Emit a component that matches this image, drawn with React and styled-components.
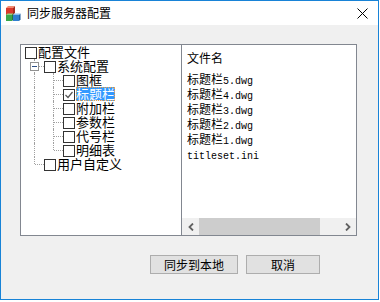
import styled, { createGlobalStyle } from "styled-components";

const GlobalStyle = createGlobalStyle`
  body {
    margin: 0;
    background: #fff;
    font-family: "Noto Sans CJK SC", "Liberation Sans", sans-serif;
  }
`;

const Window = styled.div`
  width: 379px;
  height: 300px;
  box-sizing: border-box;
  border: 1px solid #1883d7;
  display: flex;
  flex-direction: column;
  background: #f0f0f0;
`;

const TitleBar = styled.div`
  height: 24px;
  flex: none;
  background: #fff;
  display: flex;
  align-items: center;
  padding-left: 4px;
`;

const Title = styled.span`
  margin-left: 6px;
  font-size: 12px;
  line-height: 24px;
  color: #000;
`;

const Close = styled.svg`
  margin-left: auto;
  margin-right: 10px;
`;

const Client = styled.div`
  flex: 1;
  display: flex;
  flex-direction: column;
  padding: 19px 21px 0 19px;
`;

const SplitBox = styled.div`
  height: 192px;
  box-sizing: border-box;
  border: 1px solid #828790;
  display: flex;
`;

const TreePane = styled.div`
  width: 160px;
  flex: none;
  background: #fff;
  border-right: 1px solid #828790;
`;

const TreeRow = styled.div`
  height: 14px;
  display: flex;
  padding-left: 4px;
`;

const Guide = styled.span`
  position: relative;
  width: 19px;
  height: 14px;
  flex: none;

  &::before {
    content: "";
    position: absolute;
    left: 9px;
    top: 0;
    height: ${(p) => (p.$kind === "end" ? "7px" : "14px")};
    border-left: 1px dotted #a0a0a0;
  }

  &::after {
    content: "";
    display: ${(p) => (p.$kind === "pass" ? "none" : "block")};
    position: absolute;
    left: 10px;
    right: 0;
    top: 7px;
    border-top: 1px dotted #a0a0a0;
  }
`;

const Expander = styled.span`
  position: absolute;
  z-index: 1;
  left: 5px;
  top: 3px;
  width: 9px;
  height: 9px;
  box-sizing: border-box;
  border: 1px solid #919191;
  background: #fff;

  &::after {
    content: "";
    position: absolute;
    left: 1px;
    right: 1px;
    top: 3px;
    border-top: 1px solid #2d4f86;
  }
`;

const CheckBox = styled.span`
  width: 12px;
  height: 12px;
  margin-top: 2px;
  box-sizing: border-box;
  border: 1px solid #333;
  background: #fff;
  flex: none;
  display: flex;
  align-items: center;
  justify-content: center;
`;

const NodeLabel = styled.span`
  margin-left: 1px;
  height: 14px;
  line-height: 14px;
  font-size: 13px;
  white-space: nowrap;
  box-sizing: border-box;
  color: ${(p) => (p.$selected ? "#fff" : "#000")};
  background: ${(p) => (p.$selected ? "#3399ff" : "transparent")};
  outline: ${(p) => (p.$selected ? "1px dotted #f0a040" : "none")};
  outline-offset: -1px;
`;

const FilePane = styled.div`
  flex: 1;
  min-width: 0;
  display: flex;
  flex-direction: column;
  background: #fff;
`;

const FileList = styled.div`
  flex: 1;
  padding: 5px 0 0 5px;
  font-size: 12px;
  color: #000;
`;

const FileHeader = styled.div`
  height: 21px;
  line-height: 15px;
`;

const FileItem = styled.div`
  height: 15px;
  line-height: 15px;
  white-space: nowrap;
`;

const Latin = styled.span`
  font-family: "Liberation Mono", monospace;
  font-size: 10px;
`;

const HScroll = styled.div`
  height: 17px;
  flex: none;
  display: flex;
  background: #f0f0f0;
`;

const ScrollArrow = styled.div`
  width: 17px;
  flex: none;
  display: flex;
  align-items: center;
  justify-content: center;
`;

const ScrollTrack = styled.div`
  flex: 1;
  display: flex;
`;

const ScrollThumb = styled.div`
  width: 121px;
  background: #cdcdcd;
`;

const ButtonRow = styled.div`
  margin-top: 19px;
  display: flex;
  justify-content: flex-end;
  gap: 8px;
  padding-right: 37px;
`;

const Button = styled.button`
  width: ${(p) => p.$w}px;
  height: 19px;
  padding: 0;
  border: 1px solid #adadad;
  background: #e1e1e1;
  font-family: inherit;
  font-size: 12px;
  line-height: 17px;
  color: #000;
`;

const tree = [
  { label: "配置文件", guides: [] },
  { label: "系统配置", guides: ["tee"], expander: true },
  { label: "图框", guides: ["pass", "tee"] },
  { label: "标题栏", guides: ["pass", "tee"], checked: true, selected: true },
  { label: "附加栏", guides: ["pass", "tee"] },
  { label: "参数栏", guides: ["pass", "tee"] },
  { label: "代号栏", guides: ["pass", "tee"] },
  { label: "明细表", guides: ["pass", "end"] },
  { label: "用户自定义", guides: ["end"] },
];

const files = [
  "标题栏5.dwg",
  "标题栏4.dwg",
  "标题栏3.dwg",
  "标题栏2.dwg",
  "标题栏1.dwg",
  "titleset.ini",
];

const AppIcon = () => (
  <svg width="16" height="16" viewBox="0 0 16 16">
    <polygon points="1,3 3,1 10,1 8,3" fill="#f28a6e" />
    <rect x="1" y="3" width="7" height="7" fill="#d9382c" />
    <polygon points="8,3 10,1 10,8 8,10" fill="#a52a1c" />
    <polygon points="1,10 2.5,8.5 8.5,8.5 7,10" fill="#8ed07e" />
    <rect x="1" y="10" width="6" height="6" fill="#3aa64a" />
    <polygon points="7,10 8.5,8.5 8.5,14.5 7,16" fill="#237a36" />
    <polygon points="8,10 9.5,8.5 15.5,8.5 14,10" fill="#8dc0f0" />
    <rect x="8" y="10" width="6" height="6" fill="#2f7fd0" />
    <polygon points="14,10 15.5,8.5 15.5,14.5 14,16" fill="#1b5a9e" />
  </svg>
);

const Chevron = ({ dir }) => (
  <svg width="6" height="8" viewBox="0 0 6 8">
    {dir === "left" ? (
      <polyline points="5,0.5 1.5,4 5,7.5" fill="none" stroke="#606060" strokeWidth="1.8" />
    ) : (
      <polyline points="1,0.5 4.5,4 1,7.5" fill="none" stroke="#606060" strokeWidth="1.8" />
    )}
  </svg>
);

const FileName = ({ name }) => (
  <FileItem>
    {name.split(/([\x00-\x7f]+)/).map((part, i) =>
      /^[\x00-\x7f]+$/.test(part) ? <Latin key={i}>{part}</Latin> : part
    )}
  </FileItem>
);

export default function App() {
  return (
    <>
      <GlobalStyle />
      <Window>
        <TitleBar>
          <AppIcon />
          <Title>同步服务器配置</Title>
          <Close width="11" height="11" viewBox="0 0 11 11">
            <line x1="0.5" y1="0.5" x2="10.5" y2="10.5" stroke="#000" strokeWidth="1" />
            <line x1="10.5" y1="0.5" x2="0.5" y2="10.5" stroke="#000" strokeWidth="1" />
          </Close>
        </TitleBar>
        <Client>
          <SplitBox>
            <TreePane>
              {tree.map((node) => (
                <TreeRow key={node.label}>
                  {node.guides.map((kind, i) => (
                    <Guide key={i} $kind={kind}>
                      {node.expander && i === node.guides.length - 1 && <Expander />}
                    </Guide>
                  ))}
                  <CheckBox>
                    {node.checked && (
                      <svg width="10" height="10" viewBox="0 0 10 10">
                        <polyline points="1.5,5 4,7.5 8.5,2" fill="none" stroke="#555" strokeWidth="1.2" />
                      </svg>
                    )}
                  </CheckBox>
                  <NodeLabel $selected={node.selected}>{node.label}</NodeLabel>
                </TreeRow>
              ))}
            </TreePane>
            <FilePane>
              <FileList>
                <FileHeader>文件名</FileHeader>
                {files.map((f) => (
                  <FileName key={f} name={f} />
                ))}
              </FileList>
              <HScroll>
                <ScrollArrow>
                  <Chevron dir="left" />
                </ScrollArrow>
                <ScrollTrack>
                  <ScrollThumb />
                </ScrollTrack>
                <ScrollArrow>
                  <Chevron dir="right" />
                </ScrollArrow>
              </HScroll>
            </FilePane>
          </SplitBox>
          <ButtonRow>
            <Button $w={88}>同步到本地</Button>
            <Button $w={74}>取消</Button>
          </ButtonRow>
        </Client>
      </Window>
    </>
  );
}
